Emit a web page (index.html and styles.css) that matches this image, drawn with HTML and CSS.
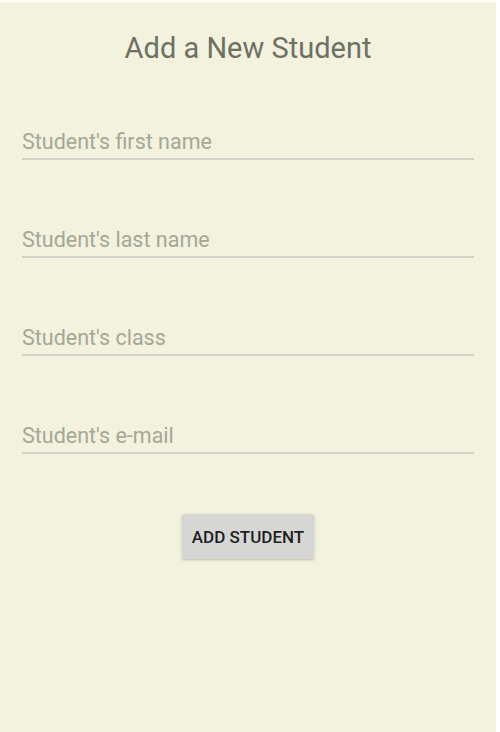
FILE: index.html
```html
<!DOCTYPE html>
<html>
<head>
<meta charset="utf-8">
<link rel="stylesheet" href="styles.css">
</head>
<body>
<div class="screen">
  <h1 class="title">Add a New Student</h1>
  <form class="form">
    <div class="field"><input type="text" placeholder="Student's first name"></div>
    <div class="field"><input type="text" placeholder="Student's last name"></div>
    <div class="field"><input type="text" placeholder="Student's class"></div>
    <div class="field"><input type="text" placeholder="Student's e-mail"></div>
    <div class="actions"><button type="button" class="btn">ADD STUDENT</button></div>
  </form>
</div>
</body>
</html>
```
FILE: styles.css
```css
html, body {
  margin: 0;
  padding: 0;
  background: #ffffff;
}
body {
  padding: 2px 4px 0 0;
  height: 732px;
  box-sizing: border-box;
  font-family: Roboto, "Noto Sans", sans-serif;
}
.screen {
  background: #f3f2de;
  height: 730px;
  box-sizing: border-box;
  padding: 0 22px;
}
.title {
  margin: 0;
  padding-top: 29px;
  font-weight: 400;
  font-size: 29px;
  line-height: 34px;
  color: #6d7064;
  text-align: center;
}
.form {
  display: flex;
  flex-direction: column;
  padding-top: 50px;
}
.field {
  height: 98px;
  display: flex;
  align-items: flex-end;
}
.field:first-child {
  height: 45px;
}
.field input {
  width: 100%;
  border: none;
  border-bottom: 2px solid #d2d3c6;
  background: transparent;
  font-family: Roboto, "Noto Sans", sans-serif;
  font-weight: 400;
  font-size: 21.5px;
  line-height: 26px;
  padding: 0 0 3px 0;
  outline: none;
}
.field input::placeholder {
  color: #a5a797;
}
.actions {
  display: flex;
  justify-content: center;
  padding-top: 60px;
}
.btn {
  width: 132px;
  height: 45px;
  border: none;
  border-radius: 2px;
  background: #d6d7d5;
  color: #1f1f1f;
  font-family: Roboto, "Noto Sans", sans-serif;
  font-weight: 500;
  font-size: 17px;
  padding: 0;
  box-shadow: 0 1px 3px rgba(0,0,0,0.22);
}
```
